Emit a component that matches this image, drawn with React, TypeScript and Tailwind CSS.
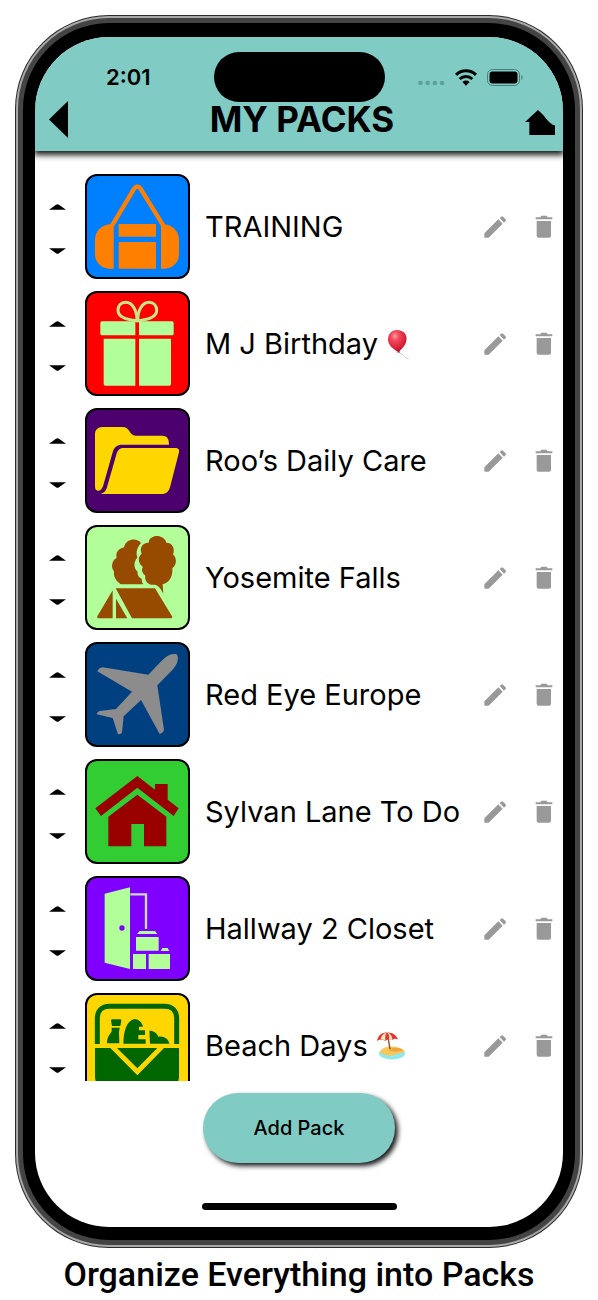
import type { ReactNode } from "react";

type Pack = {
  name: string;
  tile: string;
  icon: ReactNode;
  emoji?: ReactNode;
};

/* Emoji drawings that follow a pack name */
const Balloon = () => (
  <svg viewBox="0 0 26 30" className="h-[30px] w-[26px] shrink-0" role="img" aria-label="balloon">
    <defs>
      <radialGradient id="balloon" cx="38%" cy="28%" r="75%">
        <stop offset="0" stopColor="#ff9a9a" />
        <stop offset="0.3" stopColor="#f2485a" />
        <stop offset="1" stopColor="#c80d25" />
      </radialGradient>
    </defs>
    <path d="M13 22c0 3 2 2 4 4s2 3 6 4" fill="none" stroke="#b9b9b9" strokeWidth="0.8" />
    <path d="M11 1C5 1 2 5.500 2 10.500c0 5.500 5 9.500 9.500 12l1.500.2 1-1c3.500-3.700 6.500-7.200 6.500-12C20.500 4.500 17 1 11 1z" fill="url(#balloon)" />
    <path d="M12.500 21.500l-1.500 2h3.200z" fill="#b80d22" />
  </svg>
);

const BeachUmbrella = () => (
  <svg viewBox="0 0 30 30" className="h-[30px] w-[30px] shrink-0" role="img" aria-label="beach with umbrella">
    <ellipse cx="16" cy="22.500" rx="13" ry="6" fill="#8ce9ee" />
    <path d="M4 21c1-4 7-6 13-5.500 5 .4 10 2 12 5-3 1.500-4 2-8 2.200-3 2-8 2.600-11 1.300C7 23.500 5 22.500 4 21z" fill="#f7c75c" />
    <path d="M12 19c4-3 11-3 15 0-3 2-10 2.500-15 0z" fill="#f0a63c" />
    <path d="M11.500 3l2.500 15" stroke="#8a5a3a" strokeWidth="1.500" />
    <path d="M1 10C2 4 6 1.500 11 1.500c5.500-.3 9.500 2.500 11 7-2-1-4-1-5.500.6-2-1.300-5-1.200-7 .8C7 8.500 3 8.500 1 10z" fill="#e2382f" />
    <path d="M9.500 9.900C7.500 8.600 6 8.500 4.500 8.700 5 5 7.500 2.500 10.500 1.500 9 4 9 7 9.500 9.900z" fill="#fbe9c4" />
    <path d="M16.500 9.100c-1-.6-2-.9-3.300-.9C13.500 5.500 13 3.500 11.500 1.500c3 1 4.500 3.500 5 7.600z" fill="#fbe9c4" />
  </svg>
);

const packs: Pack[] = [
  {
    name: "TRAINING",
    tile: "bg-[#007fff]",
    icon: (
      <svg viewBox="159 33 303 303" className="size-full" fill="#ff7f00">
        <path d="M234 182L301 70q9-11 18 0L388 182" fill="none" stroke="#ff7f00" strokeWidth="13" />
        <path d="M239 178v133h-15c-24-2-41-20-41-43v-44c0-24 20-45 44-46z" />
        <path d="M381 178v133h13c24-2 41-20 41-43v-44c0-24-20-45-44-46z" />
        <path d="M254 177h112v38H254zM254 231h112v80H254z" />
      </svg>
    ),
  },
  {
    name: "M J Birthday",
    tile: "bg-[#ff0000]",
    emoji: <Balloon />,
    icon: (
      <svg viewBox="159 384 303 303" className="size-full" fill="#b2ff99">
        <g fill="none" stroke="#c4e888" strokeWidth="9">
          <path d="M309 467c0-30-13-55-34-55-14 0-23 10-23 24 0 18 20 28 57 31z" />
          <path d="M311 467c0-30 13-55 34-55 14 0 23 10 23 24 0 18-20 28-57 31z" />
        </g>
        <path d="M204 469h100v42H204q-5 0-5-5v-32q0-5 5-5zM315 469h99q5 0 5 5v32q0 5-5 5h-99z" />
        <path d="M209 521h95v141h-90q-5 0-5-5zM315 521h96v136q0 5-5 5h-91z" />
      </svg>
    ),
  },
  {
    name: "Roo’s Daily Care",
    tile: "bg-[#4b006e]",
    icon: (
      <svg viewBox="159 30 303 303" className="size-full" fill="#ffd700">
        <path d="M183 103c0-13 9-22 22-22h60c24 0 20 26 40 26h80c14 0 20 9 20 27H265c-16 0-25 8-29 23l-27 95c-3 12-8 20-15 20-8 0-11-5-11-12z" />
        <path d="M270 144h157q10 1 8 13l-26 101c-5 17-10 24-28 24H199c14-4 18-12 21-24l26-91c4-15 9-23 24-23z" />
      </svg>
    ),
  },
  {
    name: "Yosemite Falls",
    tile: "bg-[#b2ff99]",
    icon: (
      <svg viewBox="159 381 303 303" className="size-full" fill="#964b00">
        <path d="M321 429c-10-16-45-15-51 13-18 4-26 18-22 31-15 9-18 29-8 41-2 16 5 28 20 39h68c-4-5-5-11-5-17-10-4-14-13-12-21-12-10-13-30-1-42-5-17-1-30 11-44z" />
        <path d="M344 428c2-26 46-27 53 0 19 0 27 20 20 35 12 11 12 32-2 42 2 25-9 43-29 48l2 28c-8-16-15-25-25-27-20 3-32-11-29-27-14-12-10-22-7-26-15-12-17-29-4-40-7-16 1-33 21-33z" />
        <path d="M236 571v84h-43q-6-1-3-6zM246 596l34 59h-34zM245 565h118l52 85q0 5-5 5H294z" />
      </svg>
    ),
  },
  {
    name: "Red Eye Europe",
    tile: "bg-[#004080]",
    icon: (
      <svg viewBox="159 30 303 303" className="size-full" fill="#8c8c8c">
        <path d="M343 122l43-45c15-15 31-20 42-16 8 10 3 31-13 47l-45 46 20 133q-2 9-13 13l-56-102-52 49-5 49q-3 5-12 5l-16-49-48-11q1-7 9-10l49-6 48-52-104-61q4-10 16-12z" />
      </svg>
    ),
  },
  {
    name: "Sylvan Lane To Do",
    tile: "bg-[#32cd32]",
    icon: (
      <svg viewBox="159 381 303 303" className="size-full" fill="#990000">
        <path d="M310 426l53 41v-17h38v47l33 26-15 23-109-85-109 85-17-23z" />
        <path d="M310 482l87 66v89h-67v-67h-38v67h-69v-89z" />
      </svg>
    ),
  },
  {
    name: "Hallway 2 Closet",
    tile: "bg-[#7f00ff]",
    icon: (
      <svg viewBox="159 30 303 303" className="size-full" fill="#b2ff99">
        <path d="M212 77l76-19v245l-76-19z" />
        <circle cx="264" cy="180" r="8" fill="#7f00ff" />
        <path d="M289 79h47v104" fill="none" stroke="#cbd9cf" strokeWidth="7" />
        <path d="M317 189h46l7 9h-61zM306 207h68v41h-68zM385 240h16l5 9h-26zM297 258h39v45h-39zM344 258h64v45h-64z" />
      </svg>
    ),
  },
  {
    name: "Beach Days",
    tile: "bg-[#ffd700]",
    emoji: <BeachUmbrella />,
    icon: (
      <svg viewBox="159 381 303 303" className="size-full" fill="#006600">
        <path d="M190 528v-77c0-22 14-36 36-36h166c22 0 36 14 36 36v77" fill="none" stroke="#006600" strokeWidth="15" />
        <path d="M235 454h23q4 0 4 4l-3 16h-25l-3-16q0-4 4-4zM233 479h24l-2 13 1 34h-37c0-21 10-27 14-36z" />
        <path d="M268 527c1-40 10-67 32-74 14 0 24 10 27 23h-12v11h18v14h-20v13h22v13z" />
        <path d="M346 488c14 0 23 7 27 18 16-3 31 6 33 21h-58z" />
        <path d="M183 540h46l81 82 80-82h45v85c0 22-12 34-34 34H217c-22 0-34-12-34-34z" />
        <path d="M249 540h121l-60 61z" />
      </svg>
    ),
  },
];

function StatusBar() {
  return (
    <div className="grid h-[50px] grid-cols-[1fr_171px_1fr] items-center">
      <div className="pl-2 text-center text-[22px] font-semibold leading-[50px]">2:01</div>
      <div className="h-[50px] rounded-full bg-black" />
      <div className="flex items-center gap-[10px] pl-[33px]">
        <svg viewBox="0 0 27 18" className="h-[18px] w-[27px]" fill="#5aa39c">
          <circle cx="2.500" cy="15" r="2.300" />
          <circle cx="9.700" cy="15" r="2.300" />
          <circle cx="16.900" cy="15" r="2.300" />
          <circle cx="24.100" cy="15" r="2.300" />
        </svg>
        <svg viewBox="0 0 22 17" className="h-[17px] w-[22px]" fill="none" stroke="black" strokeWidth="3">
          <path d="M1 5.800a14.500 14.500 0 0 1 20 0" />
          <path d="M4.700 10a9.200 9.200 0 0 1 12.600 0" />
          <path d="M11 16.800l-3.600-3.900a5.200 5.200 0 0 1 7.200 0z" fill="black" stroke="none" />
        </svg>
        <svg viewBox="0 0 36 17" className="h-[17px] w-[36px]">
          <rect x="0.500" y="0.500" width="32" height="16" rx="5" fill="none" stroke="#47807b" />
          <rect x="2.500" y="2.500" width="28" height="12" rx="3" fill="black" />
          <path d="M34.300 6v5q1.400-.7 1.400-2.500T34.300 6z" fill="#47807b" />
        </svg>
      </div>
    </div>
  );
}

function Header() {
  return (
    <header className="relative bg-[#80cbc4] pt-[15px] pb-[15px] shadow-[0_3px_6px_1px_rgba(0,0,0,0.9)]">
      <StatusBar />
      <div className="flex h-[34px] items-center justify-between pr-2 pl-[14px]">
        <button type="button" aria-label="Back" className="w-[30px]">
          <svg viewBox="0 0 19 37" className="h-[37px] w-[19px]">
            <path d="M0 18.500L19 0v37z" />
          </svg>
        </button>
        <h1 className="text-[35px] font-bold leading-[34px]">MY PACKS</h1>
        <button type="button" aria-label="Home" className="w-[30px] pt-[6px]">
          <svg viewBox="683 327 90 75" className="h-[25px] w-[30px]">
            <path d="M722 327l15 14c8 9 19 26 33 32h3v29h-77v-39h-13z" />
          </svg>
        </button>
      </div>
    </header>
  );
}

function PackRow({ pack }: { pack: Pack }) {
  return (
    <li className="flex h-[105px] items-center">
      <div className="flex w-[50px] flex-col items-center gap-[14px] pt-1 pr-[5px]">
        <button type="button" aria-label={`Move ${pack.name} up`} className="flex h-[30px] w-full items-center justify-center">
          <svg viewBox="0 0 17 6" className="h-[6px] w-[17px]">
            <path d="M0 5.800L7 .7q1.500-1 3 0l7 5.100z" />
          </svg>
        </button>
        <button type="button" aria-label={`Move ${pack.name} down`} className="flex h-[30px] w-full items-center justify-center">
          <svg viewBox="0 0 17 6" className="h-[6px] w-[17px]">
            <path d="M0 .2l7 5.100q1.500 1 3 0L17 .2z" />
          </svg>
        </button>
      </div>
      <div className={`size-[105px] shrink-0 overflow-hidden rounded-xl border-2 border-black ${pack.tile}`}>{pack.icon}</div>
      <div className="flex min-w-0 flex-1 items-center gap-2 pl-[15px] text-[29px] leading-[36px] whitespace-nowrap">
        <span>{pack.name}</span>
        {pack.emoji}
      </div>
      <div className="flex shrink-0 gap-[19px] pr-1 text-[#999]">
        <button type="button" aria-label={`Edit ${pack.name}`}>
          <svg viewBox="329 64 90 90" className="size-[30px]" fill="currentColor">
            <path d="M342 128l42-42 13 13-42 42h-11q-2 0-2-2zM388 82l4-4q3-3 6 0l8 8q2 3 0 5l-5 5z" />
          </svg>
        </button>
        <button type="button" aria-label={`Delete ${pack.name}`}>
          <svg viewBox="478 64 90 90" className="size-[30px]" fill="currentColor">
            <path d="M498 80h14l3-5h16l3 5h14v6h-50zM501 91h43v44q0 6-6 6h-31q-6 0-6-6z" />
          </svg>
        </button>
      </div>
    </li>
  );
}

export default function App() {
  return (
    <main className="bg-white px-[15px] pt-[15px] font-['Inter',sans-serif] text-black">
      {/* Phone body: dark rim, light rim, steel band, black bezel */}
      <div className="rounded-[94px] bg-[#2b2b2b] p-px">
        <div className="rounded-[93px] bg-[#a8a8a8] p-[2px]">
          <div className="rounded-[91px] bg-[#444] p-[5px]">
            <div className="rounded-[86px] bg-black px-[12px] pt-[14px] pb-[13px]">
              <div className="overflow-hidden rounded-[74px] bg-white">
                <Header />
                <ul className="flex h-[930px] flex-col gap-3 overflow-hidden pt-[23px]">
                  {packs.map((pack) => (
                    <PackRow key={pack.name} pack={pack} />
                  ))}
                </ul>
                <div className="flex flex-col items-center gap-10 pt-3 pb-[17px]">
                  <button
                    type="button"
                    className="h-[70px] w-[192px] rounded-full bg-[#80cbc4] text-[20px] font-medium shadow-[3px_3px_5px_rgba(0,0,0,0.9)]"
                  >
                    Add Pack
                  </button>
                  <div className="h-[7px] w-[195px] rounded-full bg-black" />
                </div>
              </div>
            </div>
          </div>
        </div>
      </div>
      <p className="pt-[6px] text-center font-['Roboto',sans-serif] text-[34px] font-medium leading-[40px] whitespace-nowrap">
        Organize Everything into Packs
      </p>
    </main>
  );
}
